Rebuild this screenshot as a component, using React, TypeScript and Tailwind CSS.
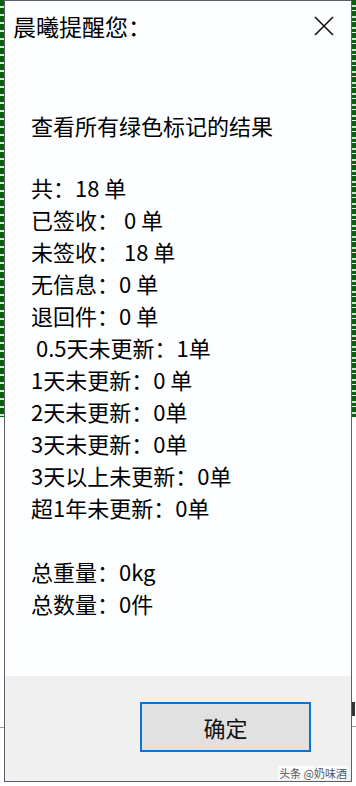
import React from "react";

const lines: string[] = [
  "共：18 单",
  "已签收： 0 单",
  "未签收： 18 单",
  "无信息：0 单",
  "退回件：0 单",
  " 0.5天未更新：1单",
  "1天未更新：0 单",
  "2天未更新：0单",
  "3天未更新：0单",
  "3天以上未更新：0单",
  "超1年未更新：0单",
];

export default function App() {
  return (
    <div
      className="relative w-[356px] h-[786px] flex bg-white overflow-hidden"
      style={{ fontFamily: '"Noto Sans CJK SC", "Noto Sans", sans-serif' }}
    >
      {/* left background strip */}
      <div className="w-[4px] flex flex-col">
        <div className="h-[417px] bg-[repeating-linear-gradient(to_bottom,#0b5f10_0px,#0b5f10_6px,#cdeccd_6px,#cdeccd_8px)]" />
        <div className="flex-1 bg-white flex flex-col">
          <div className="h-[310px]" />
          <div className="h-px bg-[#9a9a9a]" />
        </div>
      </div>

      {/* dialog */}
      <div className="w-[348px] h-[782px] border border-[#5e5e6a] bg-[#fdfeff] flex flex-col text-black">
        <div className="flex items-start justify-between pl-[8px] pr-[16px] pt-[9px]">
          <div className="text-[23px] leading-[32px]">晨曦提醒您：</div>
          <svg width="22" height="22" viewBox="0 0 22 22" className="mt-[5px]">
            <path d="M2 2 L20 20 M20 2 L2 20" stroke="#111" strokeWidth="1.6" fill="none" />
          </svg>
        </div>

        <div className="flex-1 flex flex-col pl-[26px] text-[22px] leading-[32px] whitespace-pre">
          <div className="mt-[67px]">查看所有绿色标记的结果</div>
          <div className="mt-[30px] flex flex-col">
            {lines.map((l, i) => (
              <div key={i}>{l}</div>
            ))}
          </div>
          <div className="mt-[32px] flex flex-col">
            <div>总重量：0kg</div>
            <div>总数量：0件</div>
          </div>
        </div>

        <div className="h-[105px] bg-[#f0f0f0] flex justify-end items-start pt-[26px] pr-[40px]">
          <div className="w-[171px] h-[50px] border-2 border-[#0a74d6] bg-[#e1e1e1] flex items-center justify-center text-[22px] text-[#111]">
            确定
          </div>
        </div>
      </div>

      {/* right background strip */}
      <div className="flex-1 flex flex-col">
        <div className="h-[417px] bg-[repeating-linear-gradient(to_bottom,#0b5f10_0px,#0b5f10_5px,#c5e8c5_5px,#c5e8c5_7px,#0b5f10_7px,#0b5f10_10px,#e0f3e0_10px,#e0f3e0_11px)]" />
        <div className="flex-1 bg-white flex flex-col">
          <div className="h-[285px]" />
          <div className="h-[14px] w-[3px] bg-[#333]" />
          <div className="h-[10px]" />
          <div className="h-px bg-[#9a9a9a]" />
        </div>
      </div>

      <div className="absolute right-[8px] top-[766px] whitespace-nowrap text-[11px] leading-[14px] text-[#555] bg-white/70 px-[1px]">
        头条 @奶味酒
      </div>
    </div>
  );
}
